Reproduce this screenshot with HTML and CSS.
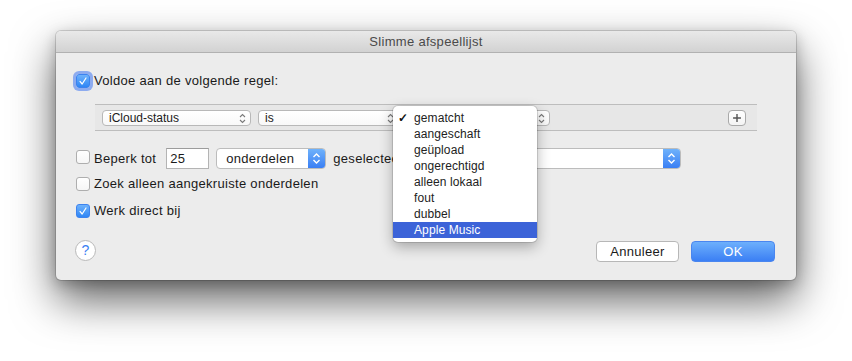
FILE: index.html
```html
<!DOCTYPE html>
<html lang="nl">
<head>
<meta charset="utf-8">
<title>Slimme afspeellijst</title>
<link rel="stylesheet" href="styles.css">
</head>
<body>
<div class="window">
  <div class="titlebar">Slimme afspeellijst</div>
  <div class="content">
    <div class="row row-match">
      <span class="cb checked focus"><svg viewBox="0 0 14 14"><path d="M3.5 7.5 L6 10.5 L10.5 3.5" /></svg></span>
      <span class="label">Voldoe aan de volgende regel:</span>
    </div>

    <div class="rulebox">
      <div class="spopup w1"><span>iCloud-status</span><svg class="chev" viewBox="0 0 7 11"><path d="M1 4 L3.5 1.5 L6 4 M1 7 L3.5 9.5 L6 7"/></svg></div>
      <div class="spopup w2"><span>is</span><svg class="chev" viewBox="0 0 7 11"><path d="M1 4 L3.5 1.5 L6 4 M1 7 L3.5 9.5 L6 7"/></svg></div>
      <div class="spopup w3"><span></span><svg class="chev" viewBox="0 0 7 11"><path d="M1 4 L3.5 1.5 L6 4 M1 7 L3.5 9.5 L6 7"/></svg></div>
      <div class="plus"><svg viewBox="0 0 18 16"><path d="M9 3.5 V12.5 M4.5 8 H13.5"/></svg></div>
    </div>

    <div class="row row-limit">
      <span class="cb"></span>
      <span class="label">Beperk tot</span>
      <span class="input">25</span>
      <div class="popup p1"><span class="val">onderdelen</span><span class="arrow"><svg viewBox="0 0 9 13"><path d="M1.5 5 L4.5 2 L7.5 5 M1.5 8 L4.5 11 L7.5 8"/></svg></span></div>
      <span class="label">geselecteerd op</span>
      <div class="popup p2"><span class="val"></span><span class="arrow"><svg viewBox="0 0 9 13"><path d="M1.5 5 L4.5 2 L7.5 5 M1.5 8 L4.5 11 L7.5 8"/></svg></span></div>
    </div>

    <div class="row row-zoek">
      <span class="cb"></span>
      <span class="label">Zoek alleen aangekruiste onderdelen</span>
    </div>

    <div class="row row-werk">
      <span class="cb checked"><svg viewBox="0 0 14 14"><path d="M3.5 7.5 L6 10.5 L10.5 3.5" /></svg></span>
      <span class="label">Werk direct bij</span>
    </div>

    <div class="footer">
      <span class="help">?</span>
      <span class="spacer"></span>
      <span class="btn cancel">Annuleer</span>
      <span class="btn ok">OK</span>
    </div>
  </div>

  <ul class="menu">
    <li class="sel"><span class="check">✓</span>gematcht</li>
    <li>aangeschaft</li>
    <li>geüpload</li>
    <li>ongerechtigd</li>
    <li>alleen lokaal</li>
    <li>fout</li>
    <li>dubbel</li>
    <li class="hi">Apple Music</li>
  </ul>
</div>
</body>
</html>
```

FILE: styles.css
```css
* { box-sizing: border-box; }
html, body { margin: 0; padding: 0; }
body {
  width: 852px;
  height: 361px;
  overflow: hidden;
  background: #ffffff;
  font-family: "Liberation Sans", Arial, sans-serif;
  color: #1a1a1a;
  padding: 31px 0 0 56px;
}
.window {
  position: relative;
  width: 740px;
  height: 249px;
  background: #ececec;
  border-radius: 5px;
  box-shadow: 0 0 0 1px rgba(0,0,0,0.14), 0 20px 44px rgba(0,0,0,0.62), 0 4px 14px rgba(0,0,0,0.22);
  display: flex;
  flex-direction: column;
}
.titlebar {
  height: 22px;
  border-radius: 5px 5px 0 0;
  background: linear-gradient(#e9e9e9, #d2d2d2);
  border-bottom: 1px solid #b1b1b1;
  text-align: center;
  font-size: 13px;
  letter-spacing: 0.3px;
  line-height: 21px;
  color: #4a4a4a;
}
.content {
  flex: 1;
  padding: 0 20px 0 20px;
  display: flex;
  flex-direction: column;
}
.row {
  display: flex;
  align-items: center;
  font-size: 13px;
  letter-spacing: 0.3px;
  line-height: 16px;
}
.label { white-space: nowrap; }
.cb {
  flex: none;
  width: 14px;
  height: 14px;
  border-radius: 3px;
  background: linear-gradient(#ffffff, #f6f6f6);
  border: 1px solid #aeaeae;
  margin-right: 4px;
  display: flex;
  align-items: center;
  justify-content: center;
}
.cb svg { width: 14px; height: 14px; }
.cb svg path { fill: none; stroke: #fff; stroke-width: 1.4; stroke-linecap: round; stroke-linejoin: round; }
.cb.checked {
  border: 1px solid #3d83ef;
  background: linear-gradient(#6eb2fb, #2f86f5);
}
.cb.focus {
  box-shadow: 0 0 0 3px rgba(110,150,240,0.75);
}
.row-match { margin-top: 20px; }

.rulebox {
  margin: 15px 19px 0 19px;
  height: 27px;
  border-top: 1px solid #bdbdbd;
  border-bottom: 1px solid #bdbdbd;
  background: #e7e7e7;
  display: flex;
  align-items: flex-start;
  padding: 5px 11px 0 7px;
  gap: 7px;
}
.spopup {
  height: 16px;
  background: linear-gradient(#ffffff, #f8f8f8);
  border: 1px solid #b8b8b8;
  border-radius: 4px;
  display: flex;
  align-items: center;
  justify-content: space-between;
  padding: 0 4px 0 6px;
  font-size: 12px;
  line-height: 14px;
}
.spopup .chev { width: 7px; height: 11px; }
.spopup .chev path, .plus path { fill: none; stroke: #7a7a7a; stroke-width: 1.1; }
.w1 { width: 149px; }
.w2 { width: 141px; }
.w3 { width: 144px; }
.plus {
  margin-left: auto;
  width: 18px;
  height: 16px;
  border: 1px solid #a9a9a9;
  border-radius: 4px;
  background: linear-gradient(#ffffff, #f4f4f4);
  display: flex;
}
.plus svg { width: 16px; height: 14px; }
.plus path { stroke: #555; stroke-width: 1.6; }

.row-limit { margin-top: 17px; height: 21px; }
.row-limit .cb { margin-top: -3px; }
.input {
  margin-left: 10px;
  width: 43px;
  height: 21px;
  background: #fff;
  border: 1px solid #b4b4b4;
  border-top-color: #9c9c9c;
  padding: 2px 0 0 3px;
}
.popup {
  height: 21px;
  display: flex;
  border: 1px solid #bcbcbc;
  border-radius: 4px;
  background: #fff;
  overflow: hidden;
}
.popup .val { flex: 1; padding: 2px 0 0 9px; }
.popup .arrow {
  width: 17px;
  background: linear-gradient(#6fb2fb, #3a7ff4);
  display: flex;
  align-items: center;
  justify-content: center;
}
.popup .arrow svg { width: 9px; height: 13px; }
.popup .arrow path { fill: none; stroke: #fff; stroke-width: 1.4; }
.p1 { width: 110px; margin: 0 7px 0 7px; }
.p2 { width: 244px; margin-left: 7px; }

.row-zoek { margin-top: 7px; }
.row-werk { margin-top: 11px; }

.footer {
  margin-top: 21px;
  display: flex;
  align-items: flex-start;
}
.help {
  margin-left: -1px;
  width: 21px;
  height: 21px;
  border-radius: 50%;
  background: #fff;
  border: 1px solid #b9b9b9;
  color: #3b7ff3;
  font-size: 14px;
  text-align: center;
  line-height: 19px;
}
.spacer { flex: 1; }
.btn {
  height: 21px;
  border-radius: 4px;
  font-size: 13px;
  letter-spacing: 0.3px;
  text-align: center;
  line-height: 19px;
  margin-top: 1px;
}
.cancel {
  width: 83px;
  background: #fff;
  border: 1px solid #b7b7b7;
  margin-right: 12px;
}
.ok {
  width: 84px;
  color: #fff;
  background: linear-gradient(#6db0fc, #3b7ff4);
  border: 1px solid #4a86ef;
  margin-right: 1px;
}

.menu {
  position: absolute;
  left: 337px;
  top: 75px;
  width: 144px;
  margin: 0;
  padding: 4px 0;
  list-style: none;
  background: #fff;
  border-radius: 5px;
  box-shadow: 0 0 0 1px rgba(0,0,0,0.12), 0 5px 14px rgba(0,0,0,0.3);
  font-size: 12px;
  letter-spacing: 0.1px;
}
.menu li {
  position: relative;
  height: 16px;
  line-height: 16px;
  padding-left: 21px;
  color: #222;
}
.menu li.hi { background: #3c63d8; color: #fff; }
.menu .check {
  position: absolute;
  left: 5px;
  top: 0;
  font-size: 12px;
  font-weight: bold;
  color: #111;
}
```
